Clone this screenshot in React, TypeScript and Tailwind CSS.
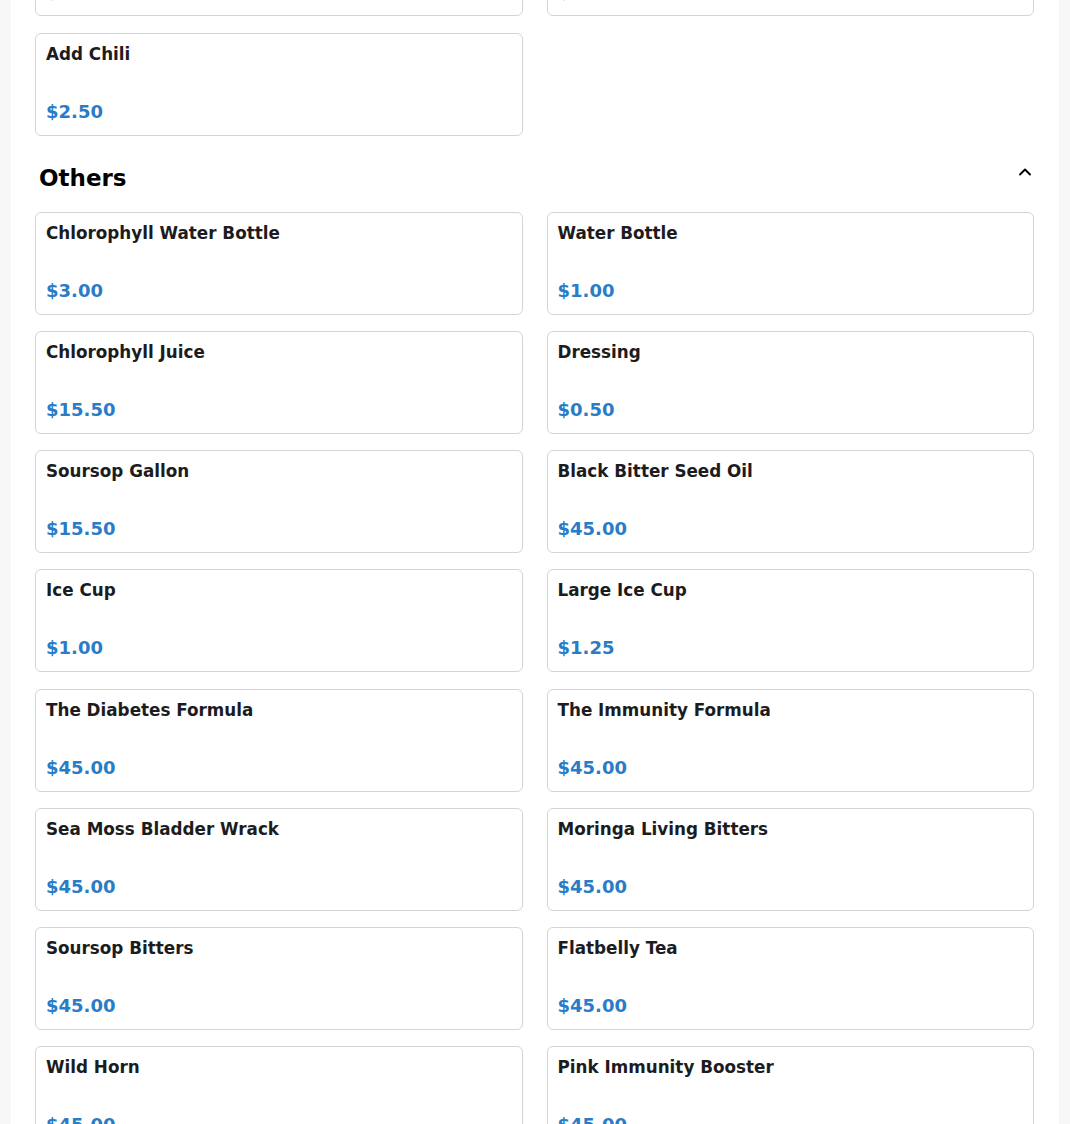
import React from 'react'
import { ChevronUp } from 'lucide-react'

type Item = { name: string; price: string }

const prevItems: Item[] = [
  { name: 'Add Avocado', price: '$3.00' },
  { name: 'Add Cheese', price: '$2.00' },
  { name: 'Add Chili', price: '$2.50' },
]

const others: Item[] = [
  { name: 'Chlorophyll Water Bottle', price: '$3.00' },
  { name: 'Water Bottle', price: '$1.00' },
  { name: 'Chlorophyll Juice', price: '$15.50' },
  { name: 'Dressing', price: '$0.50' },
  { name: 'Soursop Gallon', price: '$15.50' },
  { name: 'Black Bitter Seed Oil', price: '$45.00' },
  { name: 'Ice Cup', price: '$1.00' },
  { name: 'Large Ice Cup', price: '$1.25' },
  { name: 'The Diabetes Formula', price: '$45.00' },
  { name: 'The Immunity Formula', price: '$45.00' },
  { name: 'Sea Moss Bladder Wrack', price: '$45.00' },
  { name: 'Moringa Living Bitters', price: '$45.00' },
  { name: 'Soursop Bitters', price: '$45.00' },
  { name: 'Flatbelly Tea', price: '$45.00' },
  { name: 'Wild Horn', price: '$45.00' },
  { name: 'Pink Immunity Booster', price: '$45.00' },
]

const ItemCard = ({ item }: { item: Item }) => (
  <div className="h-[103px] flex flex-col justify-between bg-white border border-[#d4d4d4] rounded-md px-[10px] pt-[9px] pb-[10px] cursor-pointer hover:shadow">
    <div className="text-[16.8px] leading-[22px] font-bold text-[#1c1c1e]">{item.name}</div>
    <div className="text-[18px] leading-[26px] font-bold text-[#2a7cc6]">{item.price}</div>
  </div>
)

const App = () => {
  return (
    <div
      className="h-[1124px] overflow-hidden bg-[#f7f7f7] px-[11px]"
      style={{ fontFamily: '"DejaVu Sans", "Noto Sans", sans-serif' }}
    >
      <div className="bg-white min-h-full pl-6 pr-[25px] pb-10 -mt-[87px]">
        {/* Previous category (tail) */}
        <div className="grid grid-cols-2 gap-x-6 gap-y-[17px]">
          {prevItems.map((it) => (
            <ItemCard key={it.name} item={it} />
          ))}
        </div>

        {/* Others */}
        <section className="mt-[26px]">
          <div className="flex justify-between items-start pl-1 -mr-[1px] mb-[18px]">
            <h2 className="text-[23px] leading-8 font-bold text-black">Others</h2>
            <button className="text-black">
              <ChevronUp size={20} strokeWidth={2.25} />
            </button>
          </div>
          <div className="grid grid-cols-2 gap-x-6 gap-y-[16.15px]">
            {others.map((it) => (
              <ItemCard key={it.name} item={it} />
            ))}
          </div>
        </section>
      </div>
    </div>
  )
}

export default App
